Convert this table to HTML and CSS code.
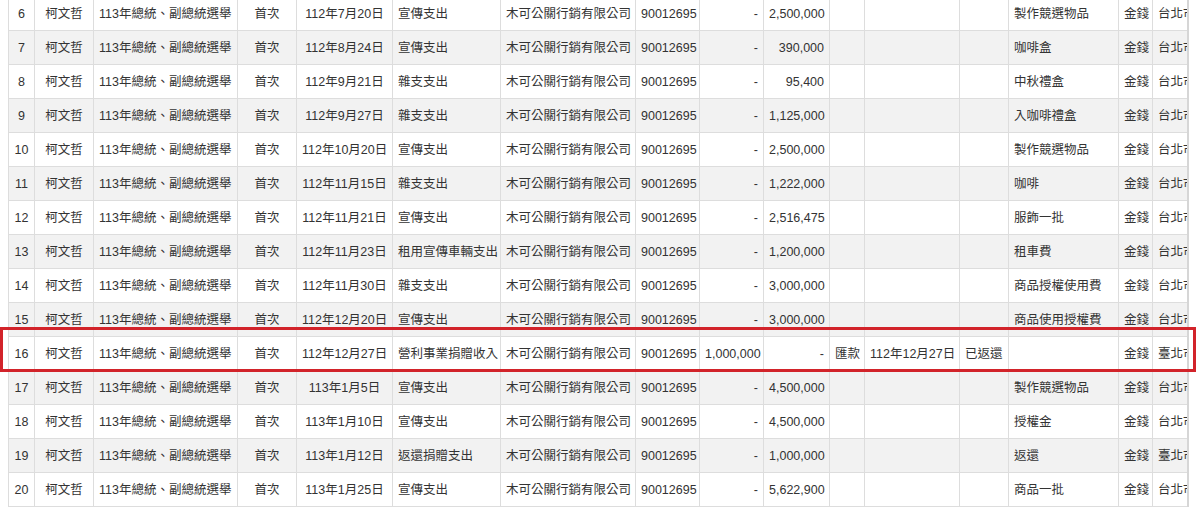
FILE: index.html
```html
<!DOCTYPE html>
<html lang="zh-Hant">
<head>
<meta charset="utf-8">
<title>政治獻金明細</title>
<link rel="stylesheet" href="styles.css">
</head>
<body>
<div class="page">
  <div class="scroller">
    <table class="grid">
      <colgroup>
        <col class="w-no"><col class="w-name"><col class="w-elect"><col class="w-first"><col class="w-date">
        <col class="w-type"><col class="w-payee"><col class="w-id"><col class="w-in"><col class="w-out">
        <col class="w-method"><col class="w-rdate"><col class="w-status"><col class="w-use"><col class="w-kind"><col class="w-addr">
      </colgroup>
      <tbody>
        <tr><td class="c">6</td><td class="c">柯文哲</td><td>113年總統、副總統選舉</td><td class="c">首次</td><td class="c">112年7月20日</td><td>宣傳支出</td><td>木可公關行銷有限公司</td><td>90012695</td><td class="r">-</td><td class="r">2,500,000</td><td></td><td></td><td></td><td>製作競選物品</td><td>金錢</td><td class="clip">台北市</td></tr>
        <tr><td class="c">7</td><td class="c">柯文哲</td><td>113年總統、副總統選舉</td><td class="c">首次</td><td class="c">112年8月24日</td><td>宣傳支出</td><td>木可公關行銷有限公司</td><td>90012695</td><td class="r">-</td><td class="r">390,000</td><td></td><td></td><td></td><td>咖啡盒</td><td>金錢</td><td class="clip">台北市</td></tr>
        <tr><td class="c">8</td><td class="c">柯文哲</td><td>113年總統、副總統選舉</td><td class="c">首次</td><td class="c">112年9月21日</td><td>雜支支出</td><td>木可公關行銷有限公司</td><td>90012695</td><td class="r">-</td><td class="r">95,400</td><td></td><td></td><td></td><td>中秋禮盒</td><td>金錢</td><td class="clip">台北市</td></tr>
        <tr><td class="c">9</td><td class="c">柯文哲</td><td>113年總統、副總統選舉</td><td class="c">首次</td><td class="c">112年9月27日</td><td>雜支支出</td><td>木可公關行銷有限公司</td><td>90012695</td><td class="r">-</td><td class="r">1,125,000</td><td></td><td></td><td></td><td>入咖啡禮盒</td><td>金錢</td><td class="clip">台北市</td></tr>
        <tr><td class="c">10</td><td class="c">柯文哲</td><td>113年總統、副總統選舉</td><td class="c">首次</td><td class="c">112年10月20日</td><td>宣傳支出</td><td>木可公關行銷有限公司</td><td>90012695</td><td class="r">-</td><td class="r">2,500,000</td><td></td><td></td><td></td><td>製作競選物品</td><td>金錢</td><td class="clip">台北市</td></tr>
        <tr><td class="c">11</td><td class="c">柯文哲</td><td>113年總統、副總統選舉</td><td class="c">首次</td><td class="c">112年11月15日</td><td>雜支支出</td><td>木可公關行銷有限公司</td><td>90012695</td><td class="r">-</td><td class="r">1,222,000</td><td></td><td></td><td></td><td>咖啡</td><td>金錢</td><td class="clip">台北市</td></tr>
        <tr><td class="c">12</td><td class="c">柯文哲</td><td>113年總統、副總統選舉</td><td class="c">首次</td><td class="c">112年11月21日</td><td>宣傳支出</td><td>木可公關行銷有限公司</td><td>90012695</td><td class="r">-</td><td class="r">2,516,475</td><td></td><td></td><td></td><td>服飾一批</td><td>金錢</td><td class="clip">台北市</td></tr>
        <tr><td class="c">13</td><td class="c">柯文哲</td><td>113年總統、副總統選舉</td><td class="c">首次</td><td class="c">112年11月23日</td><td>租用宣傳車輛支出</td><td>木可公關行銷有限公司</td><td>90012695</td><td class="r">-</td><td class="r">1,200,000</td><td></td><td></td><td></td><td>租車費</td><td>金錢</td><td class="clip">台北市</td></tr>
        <tr><td class="c">14</td><td class="c">柯文哲</td><td>113年總統、副總統選舉</td><td class="c">首次</td><td class="c">112年11月30日</td><td>雜支支出</td><td>木可公關行銷有限公司</td><td>90012695</td><td class="r">-</td><td class="r">3,000,000</td><td></td><td></td><td></td><td>商品授權使用費</td><td>金錢</td><td class="clip">台北市</td></tr>
        <tr><td class="c">15</td><td class="c">柯文哲</td><td>113年總統、副總統選舉</td><td class="c">首次</td><td class="c">112年12月20日</td><td>宣傳支出</td><td>木可公關行銷有限公司</td><td>90012695</td><td class="r">-</td><td class="r">3,000,000</td><td></td><td></td><td></td><td>商品使用授權費</td><td>金錢</td><td class="clip">台北市</td></tr>
        <tr><td class="c">16</td><td class="c">柯文哲</td><td>113年總統、副總統選舉</td><td class="c">首次</td><td class="c">112年12月27日</td><td>營利事業捐贈收入</td><td>木可公關行銷有限公司</td><td>90012695</td><td class="r">1,000,000</td><td class="r">-</td><td>匯款</td><td>112年12月27日</td><td>已返還</td><td></td><td>金錢</td><td class="clip">臺北市</td></tr>
        <tr><td class="c">17</td><td class="c">柯文哲</td><td>113年總統、副總統選舉</td><td class="c">首次</td><td class="c">113年1月5日</td><td>宣傳支出</td><td>木可公關行銷有限公司</td><td>90012695</td><td class="r">-</td><td class="r">4,500,000</td><td></td><td></td><td></td><td>製作競選物品</td><td>金錢</td><td class="clip">台北市</td></tr>
        <tr><td class="c">18</td><td class="c">柯文哲</td><td>113年總統、副總統選舉</td><td class="c">首次</td><td class="c">113年1月10日</td><td>宣傳支出</td><td>木可公關行銷有限公司</td><td>90012695</td><td class="r">-</td><td class="r">4,500,000</td><td></td><td></td><td></td><td>授權金</td><td>金錢</td><td class="clip">台北市</td></tr>
        <tr><td class="c">19</td><td class="c">柯文哲</td><td>113年總統、副總統選舉</td><td class="c">首次</td><td class="c">113年1月12日</td><td>返還捐贈支出</td><td>木可公關行銷有限公司</td><td>90012695</td><td class="r">-</td><td class="r">1,000,000</td><td></td><td></td><td></td><td>返還</td><td>金錢</td><td class="clip">臺北市</td></tr>
        <tr><td class="c">20</td><td class="c">柯文哲</td><td>113年總統、副總統選舉</td><td class="c">首次</td><td class="c">113年1月25日</td><td>宣傳支出</td><td>木可公關行銷有限公司</td><td>90012695</td><td class="r">-</td><td class="r">5,622,900</td><td></td><td></td><td></td><td>商品一批</td><td>金錢</td><td class="clip">台北市</td></tr>
      </tbody>
    </table>
  </div>
</div>
<div class="highlight"></div>
</body>
</html>
```
FILE: styles.css
```css
html, body {
  margin: 0;
  padding: 0;
  background: #fff;
}
body {
  position: relative;
  height: 522px;
  overflow: hidden;
  font-family: "Liberation Sans", "Noto Sans CJK TC", sans-serif;
  font-size: 12.5px;
  color: #333;
}
.page {
  padding-left: 8px;
  margin-top: -4px;
}
.scroller {
  width: 1179px;
  overflow: hidden;
  border-right: 2px solid #d6d6d6;
}
.grid {
  border-collapse: collapse;
  table-layout: fixed;
  width: 1240px;
}
.grid td {
  height: 33px;
  padding: 0 5px;
  border: 1px solid #dddddd;
  vertical-align: middle;
  white-space: nowrap;
  overflow: hidden;
  line-height: 18px;
}
.grid tbody tr:nth-child(even) td {
  background: #f2f2f2;
}
.grid td.c { text-align: center; }
.grid td.r { text-align: right; }
.grid td.clip { overflow: hidden; }

.w-no { width: 26px; }
.w-name { width: 59px; }
.w-elect { width: 144px; }
.w-first { width: 59px; }
.w-date { width: 96px; }
.w-type { width: 108px; }
.w-payee { width: 135px; }
.w-id { width: 64px; }
.w-in { width: 64px; }
.w-out { width: 66px; }
.w-method { width: 35px; }
.w-rdate { width: 95px; }
.w-status { width: 49px; }
.w-use { width: 110px; }
.w-kind { width: 34px; }
.w-addr { width: 96px; }

.highlight {
  position: absolute;
  left: 0;
  top: 327px;
  width: 1190px;
  height: 39px;
  border: 3px solid #d2232a;
  pointer-events: none;
}
```
